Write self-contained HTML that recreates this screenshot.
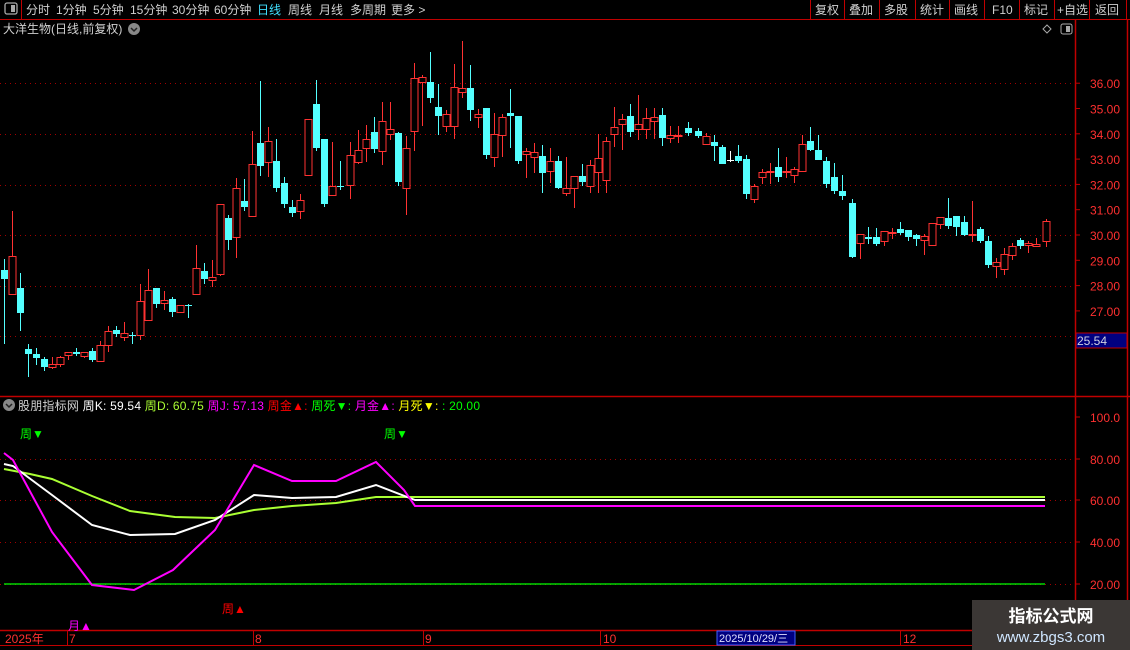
<!DOCTYPE html>
<html><head><meta charset="utf-8"><style>
html,body{margin:0;padding:0;background:#000;width:1130px;height:650px;overflow:hidden}
svg{display:block}
text{font-family:"Liberation Sans","Noto Sans CJK SC",sans-serif}
</style></head><body>
<svg id="s" width="1130" height="650" xmlns="http://www.w3.org/2000/svg" font-size="12">
<rect width="1130" height="650" fill="#000"/>
<!-- toolbar -->
<line x1="0" y1="19.5" x2="1130" y2="19.5" stroke="#c00000"/>
<line x1="21.5" y1="0" x2="21.5" y2="19" stroke="#c00000"/>
<rect x="5" y="3" width="12" height="11" rx="2" fill="none" stroke="#aaa" stroke-width="1.3"/><rect x="11" y="5" width="4" height="7" fill="#aaa"/>
<g fill="#d0d0d0" font-size="12">
<text x="26" y="14">分时</text><text x="56" y="14">1分钟</text><text x="93" y="14">5分钟</text><text x="130" y="14">15分钟</text><text x="172" y="14">30分钟</text><text x="214" y="14">60分钟</text>
<text x="257" y="14" fill="#40e0ff">日线</text><text x="288" y="14">周线</text><text x="319" y="14">月线</text><text x="350" y="14">多周期</text><text x="391" y="14">更多 &gt;</text>
<text x="815" y="14">复权</text><text x="849" y="14">叠加</text><text x="884" y="14">多股</text><text x="920" y="14">统计</text><text x="954" y="14">画线</text><text x="992" y="14">F10</text><text x="1024" y="14">标记</text><text x="1057" y="14">+自选</text><text x="1095" y="14">返回</text>
</g>
<g stroke="#c00000"><line x1="810.5" y1="0" x2="810.5" y2="19"/><line x1="844.5" y1="0" x2="844.5" y2="19"/><line x1="879.5" y1="0" x2="879.5" y2="19"/><line x1="915.5" y1="0" x2="915.5" y2="19"/><line x1="949.5" y1="0" x2="949.5" y2="19"/><line x1="984.5" y1="0" x2="984.5" y2="19"/><line x1="1019.5" y1="0" x2="1019.5" y2="19"/><line x1="1054.5" y1="0" x2="1054.5" y2="19"/><line x1="1089.5" y1="0" x2="1089.5" y2="19"/><line x1="1126.5" y1="0" x2="1126.5" y2="19"/></g>
<!-- title -->
<text x="3" y="33" fill="#d0d0d0" font-size="12">大洋生物(日线,前复权)</text>
<circle cx="134" cy="29" r="6" fill="#888"/><path d="M131 28 L134 31 L137 28" stroke="#222" stroke-width="1.5" fill="none"/>
<path d="M1047 25 L1051 29 L1047 33 L1043 29Z" fill="none" stroke="#aaa"/>
<rect x="1061" y="24" width="11" height="10" rx="2" fill="none" stroke="#aaa"/><rect x="1066" y="26" width="4" height="6" fill="#aaa"/>
<!-- frame -->
<line x1="1075.5" y1="19" x2="1075.5" y2="630" stroke="#c00000" stroke-width="1.5"/>
<line x1="1127.5" y1="19" x2="1127.5" y2="650" stroke="#c00000" stroke-width="1.5"/>
<line x1="0" y1="396.5" x2="1130" y2="396.5" stroke="#c00000" stroke-width="1.5"/>
<line x1="0" y1="630.5" x2="1130" y2="630.5" stroke="#c00000" stroke-width="1.5"/>
<line x1="0" y1="645.5" x2="1130" y2="645.5" stroke="#c00000"/>
<g id="grid" stroke="#a00000" stroke-dasharray="1,4"></g>
<g id="axis" fill="#ff3030" font-size="12"></g>
<rect x="1076" y="333" width="51" height="15" fill="#000080" stroke="#c00000"/>
<text x="1077" y="345" fill="#d0d0e0" font-size="12">25.54</text>
<g id="c"></g>
<!-- indicator -->
<circle cx="9" cy="405" r="6" fill="#888"/><path d="M6 404 L9 407 L12 404" stroke="#222" stroke-width="1.5" fill="none"/>
<text x="18" y="410" font-size="12" textLength="462" lengthAdjust="spacing"><tspan fill="#d0d0d0">股朋指标网 </tspan><tspan fill="#fff">周K: 59.54 </tspan><tspan fill="#aaff33"> 周D: 60.75 </tspan><tspan fill="#ff00ff"> 周J: 57.13 </tspan><tspan fill="#ff0000"> 周金▲: </tspan><tspan fill="#00ff00"> 周死▼: </tspan><tspan fill="#ff00ff"> 月金▲: </tspan><tspan fill="#ffff00"> 月死▼: </tspan><tspan fill="#00ff00">: 20.00</tspan></text>
<text x="20" y="438" fill="#00ff00">周▼</text><text x="384" y="438" fill="#00ff00">周▼</text>
<text x="222" y="613" fill="#ff0000">周▲</text><text x="68" y="630" fill="#ff00ff">月▲</text>
<line x1="4" y1="584" x2="1045" y2="584" stroke="#00ff00" stroke-width="1.3"/>
<polyline fill="none" stroke="#aaff33" stroke-width="2" points="4,469 30,474 52,479 92,496 130,511 175,517 215,518 254,510 292,506 336,503 376,497 415,497 1045,497"/>
<polyline fill="none" stroke="#fff" stroke-width="2" points="4,464 13,466 52,495 92,525 130,535 175,534 215,520 254,495 292,498 336,497 376,485 415,500 1045,500"/>
<polyline fill="none" stroke="#ff00ff" stroke-width="2" points="4,453 13,460 52,532 92,585 134,590 173,570 215,530 254,465 292,481 336,481 376,462 404,490 415,506 1045,506"/>
<!-- date axis -->
<g fill="#ff3030" font-size="12"><text x="5" y="643">2025年</text><text x="69" y="643">7</text><text x="255" y="643">8</text><text x="425" y="643">9</text><text x="603" y="643">10</text><text x="903" y="643">12</text></g>
<g stroke="#c00000"><line x1="67.5" y1="630" x2="67.5" y2="645"/><line x1="253.5" y1="630" x2="253.5" y2="645"/><line x1="423.5" y1="630" x2="423.5" y2="645"/><line x1="600.5" y1="630" x2="600.5" y2="645"/><line x1="900.5" y1="630" x2="900.5" y2="645"/></g>
<rect x="717" y="631" width="78" height="14" fill="#000080" stroke="#4060ff"/>
<text x="719" y="642" fill="#e0e0ff" font-size="11">2025/10/29/三</text>
<!-- watermark -->
<rect x="972" y="600" width="158" height="50" fill="#3b3735"/>
<text x="1051" y="622" fill="#fff" font-size="17" font-weight="bold" text-anchor="middle">指标公式网</text>
<text x="1051" y="642" fill="#cfe6ff" font-size="15" text-anchor="middle">www.zbgs3.com</text>
</svg>
<script>
var NS="http://www.w3.org/2000/svg";
function el(p,t,a){var e=document.createElementNS(NS,t);for(var k in a)e.setAttribute(k,a[k]);p.appendChild(e);return e;}
var g=document.getElementById('grid'),ax=document.getElementById('axis');
[83,134,185,235,286,336].forEach(function(y){el(g,'line',{x1:0,y1:y+.5,x2:1075,y2:y+.5});});
[459,500,542,584].forEach(function(y){el(g,'line',{x1:0,y1:y+.5,x2:1075,y2:y+.5});});
[36,35,34,33,32,31,30,29,28,27].forEach(function(p){var y=235-(p-30)*25.3;var t=el(ax,'text',{x:1090,y:y+5});t.textContent=p.toFixed(2);el(ax,'line',{x1:1075,y1:y,x2:1080,y2:y,stroke:'#c00000'});});
[[100,417,'100.0'],[80,459,'80.00'],[60,500,'60.00'],[40,542,'40.00'],[20,584,'20.00']].forEach(function(a){var t=el(ax,'text',{x:1090,y:a[1]+5});t.textContent=a[2];el(ax,'line',{x1:1075,y1:a[1],x2:1080,y2:a[1],stroke:'#c00000'});});
var C=[[4,270,279,259,344,'c'],[12,256,294,211,294,'r'],[20,288,313,273,331,'c'],[28,349,354,344,377,'c'],[36,354,358,348,365,'c'],[44,359,367,357,371,'c'],[52,364,367,357,369,'r'],[60,357,364,356,367,'r'],[68,352,355,352,360,'r'],[76,352,354,348,356,'c'],[84,352,356,352,358,'r'],[92,351,360,348,362,'c'],[100,345,361,341,362,'r'],[108,331,345,326,352,'r'],[116,330,334,326,337,'c'],[124,333,337,322,341,'r'],[132,335,336,332,344,'c'],[140,301,335,284,340,'r'],[148,290,320,269,321,'r'],[156,288,304,288,308,'c'],[164,300,303,291,310,'r'],[172,299,312,297,317,'c'],[180,305,312,305,313,'r'],[188,305,306,304,318,'c'],[196,268,294,245,294,'r'],[204,271,279,263,284,'c'],[212,277,280,260,287,'r'],[220,204,274,204,276,'r'],[228,218,240,215,250,'c'],[236,188,237,178,258,'r'],[244,201,207,179,211,'c'],[252,164,216,131,216,'r'],[260,143,166,81,176,'c'],[268,141,162,127,177,'r'],[276,161,188,139,192,'c'],[284,183,204,177,208,'c'],[292,207,213,200,217,'c'],[300,200,211,194,219,'r'],[308,119,175,119,175,'r'],[316,104,148,80,151,'c'],[324,139,204,139,207,'c'],[332,186,195,142,195,'r'],[340,186,187,161,190,'c'],[350,155,185,142,199,'r'],[358,150,162,130,164,'r'],[366,139,148,125,162,'r'],[374,132,149,117,153,'c'],[382,121,151,102,165,'r'],[390,129,134,102,140,'r'],[398,133,182,132,186,'c'],[406,148,188,136,215,'r'],[414,78,131,63,151,'r'],[422,77,82,75,126,'r'],[430,82,98,52,103,'c'],[438,107,116,84,135,'c'],[446,114,126,110,132,'r'],[454,87,126,64,139,'r'],[462,88,92,41,98,'r'],[470,88,110,65,121,'c'],[478,114,117,109,128,'r'],[486,108,155,108,159,'c'],[494,134,157,113,167,'r'],[502,117,135,114,157,'r'],[510,113,116,89,148,'c'],[518,116,161,116,164,'c'],[526,151,154,148,178,'r'],[534,152,157,143,173,'r'],[542,156,173,145,193,'c'],[550,161,171,148,183,'r'],[558,161,188,156,189,'c'],[566,188,193,157,196,'r'],[574,176,188,176,208,'r'],[582,176,182,164,186,'c'],[590,165,186,160,193,'r'],[598,158,172,134,193,'r'],[606,141,180,137,193,'r'],[614,127,134,107,147,'r'],[622,119,124,114,150,'r'],[630,116,132,104,137,'c'],[638,124,129,95,140,'r'],[646,118,129,108,139,'r'],[654,117,121,108,139,'r'],[662,115,138,108,146,'c'],[670,135,138,126,143,'r'],[678,135,136,126,143,'r'],[688,128,133,122,136,'c'],[698,131,136,128,138,'c'],[706,136,144,133,145,'r'],[714,142,146,135,161,'c'],[722,147,164,145,164,'c'],[730,160,161,151,162,'w'],[738,156,161,145,163,'c'],[746,159,194,155,199,'c'],[754,186,199,184,203,'r'],[762,172,177,169,184,'r'],[770,171,172,163,184,'r'],[778,167,177,148,182,'c'],[786,171,172,157,178,'r'],[794,169,175,167,183,'r'],[802,144,171,135,172,'r'],[810,141,150,127,151,'c'],[818,150,160,135,160,'c'],[826,161,184,157,188,'c'],[834,177,191,163,194,'c'],[842,191,196,175,200,'c'],[852,203,257,199,258,'c'],[860,234,243,236,259,'r'],[868,237,239,227,244,'c'],[876,237,244,228,246,'c'],[884,231,241,231,246,'r'],[892,232,233,228,239,'r'],[900,229,233,222,235,'c'],[908,230,237,230,241,'c'],[916,235,239,234,246,'c'],[924,236,240,234,255,'r'],[932,223,245,223,246,'r'],[940,217,224,217,229,'r'],[948,218,226,198,229,'c'],[956,216,227,216,236,'c'],[964,222,235,216,236,'c'],[972,234,235,201,242,'r'],[980,229,241,227,243,'c'],[988,241,265,236,268,'c'],[996,262,266,258,278,'r'],[1004,254,269,248,275,'r'],[1012,246,255,243,260,'r'],[1020,240,246,238,249,'c'],[1028,243,245,241,253,'r'],[1036,244,246,238,247,'r'],[1046,221,241,219,247,'r']];
var cg=document.getElementById('c');
C.forEach(function(k){var x=k[0],col=k[5]=='r'?'#ff3232':(k[5]=='c'?'#54ffff':'#fff');
el(cg,'line',{x1:x+.5,y1:k[3],x2:x+.5,y2:k[4],stroke:col});
var h=Math.max(k[2]-k[1],1);
if(k[5]=='r'){el(cg,'rect',{x:x-3,y:k[1]+.5,width:7,height:h,fill:'#000',stroke:col});}
else{el(cg,'rect',{x:x-3,y:k[1],width:7,height:h,fill:col});}
});
</script>
</body></html>
